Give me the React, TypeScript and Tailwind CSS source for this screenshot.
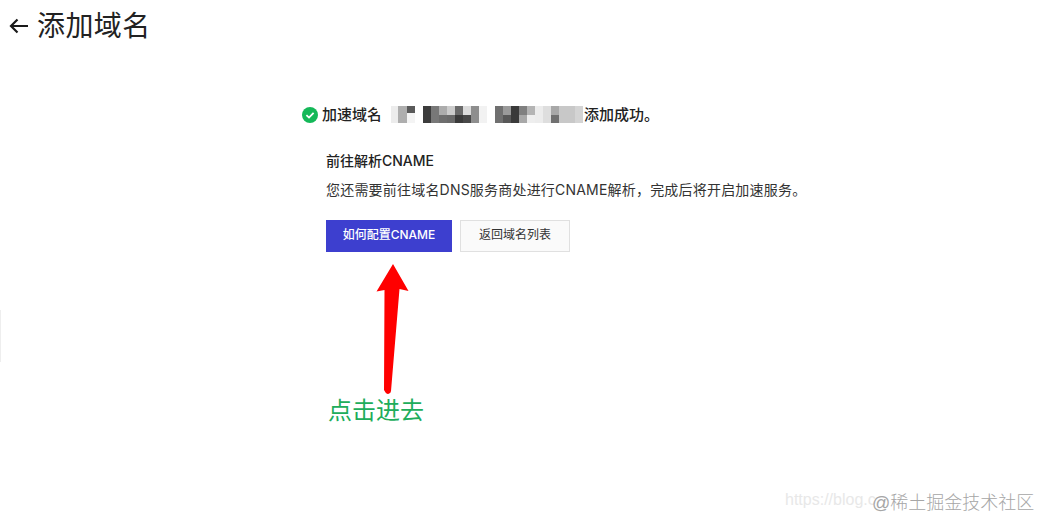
const cjk = { fontFamily: '"Inter","Noto Sans CJK SC",sans-serif' };

const ORIGIN = 382;
const tiles: [number, number, number, number, string][] = [
  [391, 107, 7, 17, "#ececec"], [398, 107, 9, 17, "#aeaeae"], [407, 107, 8, 7, "#5a5a5a"], [407, 114, 8, 10, "#f4f4f4"],
  [423, 107, 8, 17, "#3c3c3c"], [431, 107, 8, 17, "#787878"], [439, 107, 8, 9, "#acacac"], [439, 116, 8, 8, "#6e6e6e"],
  [447, 107, 8, 9, "#cccccc"], [447, 116, 8, 8, "#6a6a6a"], [455, 107, 8, 9, "#6a6a6a"], [455, 116, 8, 8, "#3a3a3a"],
  [463, 107, 8, 9, "#dcdcdc"], [463, 116, 8, 8, "#484848"], [471, 107, 8, 17, "#8e8e8e"], [479, 107, 8, 17, "#f2f2f2"],
  [495, 107, 8, 17, "#707070"], [503, 107, 8, 9, "#9a9a9a"], [503, 116, 8, 8, "#585858"], [511, 107, 8, 17, "#3a3a3a"],
  [519, 107, 8, 9, "#808080"], [519, 116, 8, 8, "#a8a8a8"], [527, 107, 8, 9, "#b4b4b4"], [527, 116, 8, 8, "#eeeeee"],
  [535, 107, 8, 17, "#ececec"], [543, 107, 8, 17, "#dedede"], [551, 107, 8, 9, "#a8a8a8"], [551, 116, 8, 8, "#707070"],
  [559, 107, 16, 17, "#c8c8c8"], [575, 107, 8, 17, "#d4d4d4"],
];

export default function App() {
  return (
    <div className="relative h-[519px] w-[1038px] overflow-hidden bg-white text-[#222222]" style={cjk}>
      <div className="flex h-[52px] items-center pl-[9px]">
        <svg width="20" height="16" viewBox="0 0 20 16" fill="none" stroke="#1a1a1a" strokeWidth="2.2" className="mr-2">
          <path d="M19 8H2M8.500 1.500 2 8l6.500 6.500" />
        </svg>
        <h1 className="text-[28px] font-normal leading-none tracking-[0.4px]">添加域名</h1>
      </div>

      <div className="ml-[302px] mt-[52px]">
        <div className="flex h-[22px] items-center pb-px">
          <svg width="16" height="16" viewBox="0 0 16 16" className="mr-1">
            <circle cx="8" cy="8" r="8" fill="#14b858" />
            <path d="M4.400 8.200 7 10.600l4.600-4.700" fill="none" stroke="#fff" strokeWidth="1.800" />
          </svg>
          <span className="whitespace-nowrap text-[15px] font-medium leading-none">加速域名</span>
          <div className="relative h-[17px] w-[202px] shrink-0">
            <svg width="214" height="30" viewBox="-8 0 214 30" className="absolute -left-2 -top-[7px]">
              <path d="M-6 5H6V24H-1L-1 16L-5 12Z" fill="#ffffff" />
              <g className="blur-[0.7px]">
                {tiles.map(([x, y, w, h, c], i) => (
                  <rect key={i} x={x - ORIGIN} y={y - 100} width={w} height={h} fill={c} />
                ))}
              </g>
            </svg>
          </div>
          <span className="whitespace-nowrap text-[15px] font-medium leading-none">添加成功。</span>
        </div>

        <div className="ml-6 mt-[25px]">
          <h2 className="text-sm font-medium leading-[20px]">前往解析CNAME</h2>
          <p className="mt-[9px] text-sm leading-[20px] tracking-[0.2px] text-[#333333]">您还需要前往域名DNS服务商处进行CNAME解析，完成后将开启加速服务。</p>
          <div className="mt-5 flex gap-2">
            <button className="h-8 w-[126px] bg-[#3d3fcf] pb-0.5 text-xs font-medium text-white">如何配置CNAME</button>
            <button className="h-8 w-[110px] border border-[#e0e0e0] bg-[#fafafa] pb-0.5 text-xs text-[#333333]">返回域名列表</button>
          </div>
        </div>
      </div>

      <div className="absolute left-0 top-[310px] h-[52px] w-px bg-[#eeeeee]" />

      <svg width="36" height="134" viewBox="0 0 36 134" className="absolute left-[375px] top-[263px]">
        <path d="M17 1 32.500 28l-9-2L15 128a3 3 0 0 1-5.500 1.500L8 127 8.500 27l-8 1.500Z" fill="#ff0000" transform="translate(1 0)" />
      </svg>
      <div className="absolute left-[328px] top-[395px] text-2xl leading-[32px] text-[#20ad5b]">点击进去</div>

      <div className="absolute left-[785px] top-[490px] whitespace-nowrap text-base leading-5 text-[#e8e8e8]" style={{ fontFamily: '"Liberation Sans",sans-serif' }}>https://blog.c</div>
      <div className="absolute left-[872px] top-[491px] whitespace-nowrap text-[18px] font-light leading-6 text-[#a6a6a6]" style={{ fontFamily: '"Liberation Sans","Noto Sans CJK SC",sans-serif' }}>@稀土掘金技术社区</div>
    </div>
  );
}
